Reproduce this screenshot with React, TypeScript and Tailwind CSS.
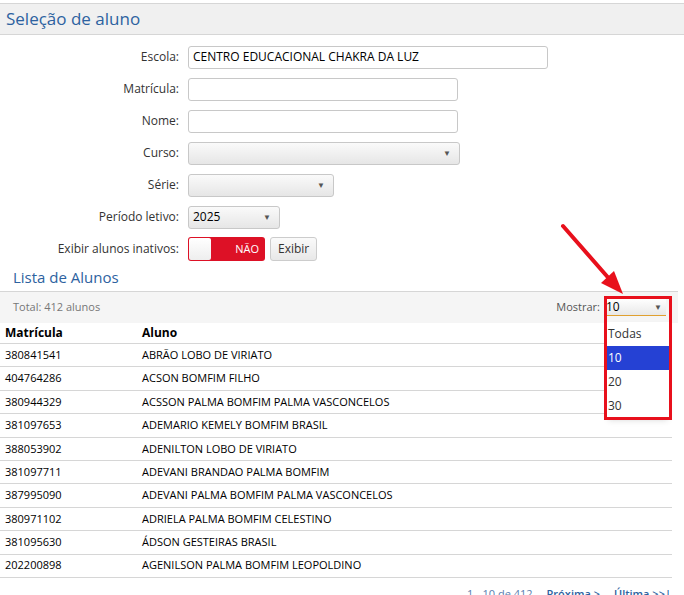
import React from 'react'

const LABEL = 'w-[188px] pr-[9px] text-right text-[12px] text-[#333]'
const INPUT = 'h-[23px] border border-[#c8c8c8] rounded-[3px] bg-white px-1 text-[12px] text-black flex items-center'
const SELECT = 'h-[23px] border border-[#c8c8c8] rounded-[3px] bg-gradient-to-b from-[#fafafa] to-[#e6e6e6] px-1 text-[12px] text-black flex items-center justify-between'

const rows: [string, string][] = [
  ['380841541', 'ABRÃO LOBO DE VIRIATO'],
  ['404764286', 'ACSON BOMFIM FILHO'],
  ['380944329', 'ACSSON PALMA BOMFIM PALMA VASCONCELOS'],
  ['381097653', 'ADEMARIO KEMELY BOMFIM BRASIL'],
  ['388053902', 'ADENILTON LOBO DE VIRIATO'],
  ['381097711', 'ADEVANI BRANDAO PALMA BOMFIM'],
  ['387995090', 'ADEVANI PALMA BOMFIM PALMA VASCONCELOS'],
  ['380971102', 'ADRIELA PALMA BOMFIM CELESTINO'],
  ['381095630', 'ÁDSON GESTEIRAS BRASIL'],
  ['202200898', 'AGENILSON PALMA BOMFIM LEOPOLDINO'],
]

function Arrow() {
  return <span className="text-[8px] text-[#555] pr-1">▼</span>
}

function Row({ label, children }: { label: string; children: React.ReactNode }) {
  return (
    <div className="flex items-center h-[32px]">
      <div className={LABEL}>{label}</div>
      {children}
    </div>
  )
}

export default function App() {
  return (
    <div className="relative w-[684px] h-[595px] overflow-hidden bg-white" style={{ fontFamily: '"Open Sans", sans-serif' }}>
      <div className="mt-[3px] h-[32px] bg-[#f0f0f0] border-t border-b border-[#d6d6d6] flex items-center pl-[6px]">
        <span className="text-[17px] text-[#2d62a0]">Seleção de aluno</span>
      </div>
      <div className="pt-[6px]">
        <Row label="Escola:"><div className={`${INPUT} w-[360px]`}>CENTRO EDUCACIONAL CHAKRA DA LUZ</div></Row>
        <Row label="Matrícula:"><div className={`${INPUT} w-[270px]`} /></Row>
        <Row label="Nome:"><div className={`${INPUT} w-[270px]`} /></Row>
        <Row label="Curso:"><div className={`${SELECT} w-[272px]`}><span /><Arrow /></div></Row>
        <Row label="Série:"><div className={`${SELECT} w-[146px]`}><span /><Arrow /></div></Row>
        <Row label="Período letivo:"><div className={`${SELECT} w-[92px]`}><span>2025</span><Arrow /></div></Row>
        <Row label="Exibir alunos inativos:">
          <div className="w-[77px] h-[24px] rounded-[3px] bg-[#dd1126] flex items-center p-[1px]">
            <div className="w-[22px] h-[22px] bg-gradient-to-b from-white to-[#eee] rounded-[2px]" />
            <span className="flex-1 text-right pr-[5px] text-[11px] text-white">NÃO</span>
          </div>
          <div className="ml-[5px] h-[24px] px-[7px] border border-[#ccc] rounded-[3px] bg-gradient-to-b from-[#fafafa] to-[#e8e8e8] text-[12px] flex items-center text-[#333]">Exibir</div>
        </Row>
      </div>
      <div className="pl-[13px] mt-[2px] text-[15px] text-[#2d62a0] leading-[20px]">Lista de Alunos</div>
      <div className="w-[678px] mt-[4px] h-[32px] bg-[#f5f5f5] border-t border-[#d6d6d6] flex items-center justify-between pl-[13px] pr-[12px]">
        <span className="text-[11px] text-[#777]">Total: 412 alunos</span>
        <div className="flex items-center gap-[4px]">
          <span className="text-[11px] text-[#555]">Mostrar:</span>
          <div className="w-[62px] h-[17px] border-b border-[#e0a030] bg-gradient-to-b from-white to-[#e8e8e8] flex items-center justify-between text-[12px] pl-[2px]">10<Arrow /></div>
        </div>
      </div>
      <div className="w-[672px]">
        <div className="flex h-[21px] items-center border-b border-[#d6d6d6] text-[12px] font-bold text-black">
          <span className="w-[142px] pl-[5px]">Matrícula</span><span>Aluno</span>
        </div>
        {rows.map(([m, n]) => (
          <div key={m} className="flex h-[23.4px] items-center border-b border-[#d6d6d6] text-[11px] text-black">
            <span className="w-[142px] pl-[5px]">{m}</span><span>{n}</span>
          </div>
        ))}
      </div>
      <div className="flex justify-end gap-[14px] pr-[13px] pt-[8px] text-[11px] leading-[16px]">
        <span className="text-[#5a7eb0]">1 - 10 de 412</span>
        <span className="text-[#2d62a0] font-semibold">Próxima &gt;</span>
        <span className="text-[#2d62a0] font-semibold">Última &gt;&gt;|</span>
      </div>

      {/* open dropdown list */}
      <div className="absolute left-[607px] top-[322px] w-[62px] h-[96px] bg-white shadow-md text-[12px] text-[#333] flex flex-col">
        <div className="h-[24px] flex items-center pl-[1px]">Todas</div>
        <div className="h-[24px] flex items-center pl-[1px] bg-[#2541d4] text-white">10</div>
        <div className="h-[24px] flex items-center pl-[1px]">20</div>
        <div className="h-[24px] flex items-center pl-[1px]">30</div>
      </div>
      {/* annotation */}
      <div className="absolute left-[604px] top-[296px] w-[68px] h-[124px] border-[3px] border-[#e8101c]" />
      <svg className="absolute left-0 top-0" width="684" height="595">
        <line x1="563" y1="226" x2="612" y2="282" stroke="#e8101c" strokeWidth="4" strokeLinecap="round" />
        <polygon points="623,294 601,283 614,271" fill="#e8101c" />
      </svg>
    </div>
  )
}
